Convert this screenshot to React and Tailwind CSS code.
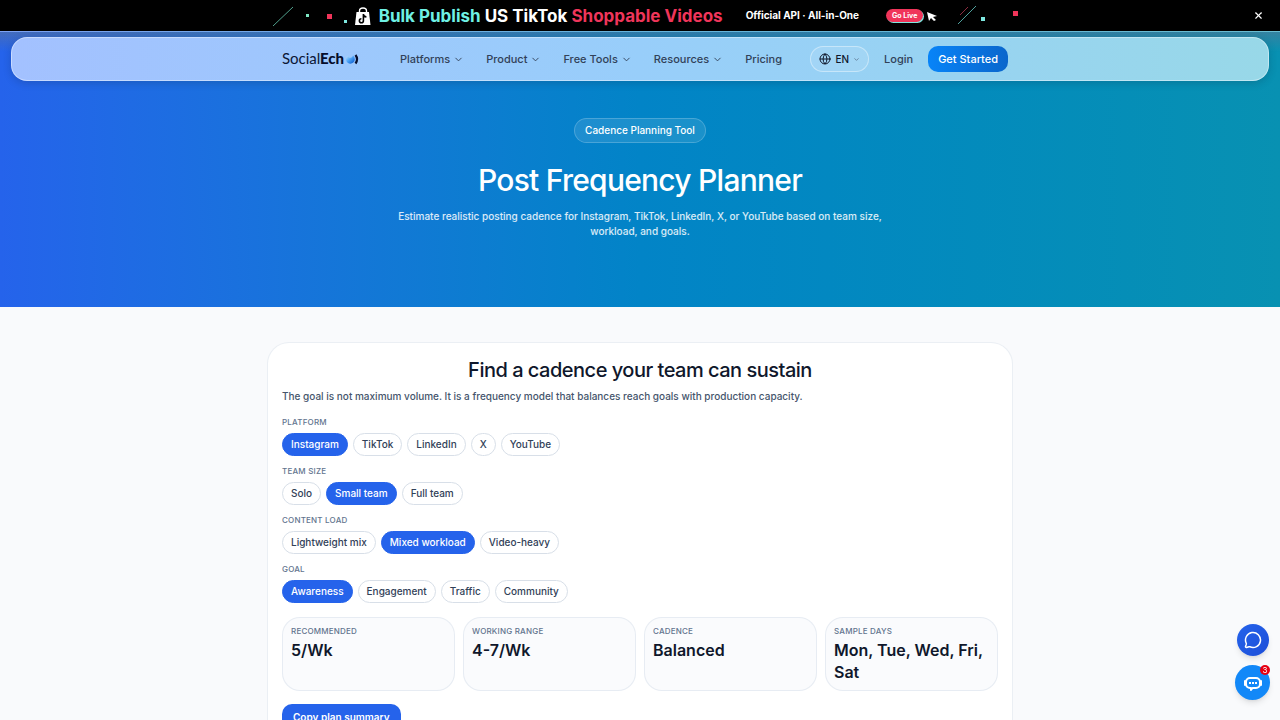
import { useState } from 'react'
import { ChevronDown, Globe, MessageCircle, X } from 'lucide-react'

const navItems = ['Platforms', 'Product', 'Free Tools', 'Resources']

const groups = [
  { key: 'platform', label: 'Platform', options: ['Instagram', 'TikTok', 'LinkedIn', 'X', 'YouTube'] },
  { key: 'team', label: 'Team size', options: ['Solo', 'Small team', 'Full team'] },
  { key: 'load', label: 'Content load', options: ['Lightweight mix', 'Mixed workload', 'Video-heavy'] },
  { key: 'goal', label: 'Goal', options: ['Awareness', 'Engagement', 'Traffic', 'Community'] },
]

const stats = [
  { label: 'Recommended', value: '5/Wk' },
  { label: 'Working range', value: '4-7/Wk' },
  { label: 'Cadence', value: 'Balanced' },
  { label: 'Sample days', value: 'Mon, Tue, Wed, Fri, Sat' },
]

function PromoBanner({ onClose }) {
  return (
    <div className="relative flex h-[31px] items-center justify-center bg-black text-white">
      <a href="#promo" className="flex items-center pl-3">
        <svg className="h-8 w-20 shrink-0" viewBox="0 0 80 32" fill="none" aria-hidden="true">
          <path d="M0 26 20 7" stroke="#4f9f8c" />
          <path d="M33 14h3v3h-3z" fill="#7ee8c4" />
          <path d="M54 14h5v5h-5z" fill="#f0355a" />
          <path d="M71 20h3v3h-3z" fill="#7ee8e0" />
        </svg>
        <svg className="ml-[2px] h-8 w-4 shrink-0" viewBox="0 0 16 32" fill="none" aria-hidden="true">
          <path d="M4.500 13v-2a3.500 3 0 0 1 7 0v2" stroke="#fff" strokeWidth="1.400" />
          <path d="M1.500 12h12.500l1.500 13H0z" fill="#fff" />
          <path d="M8.400 14v6.700a2 2 0 1 1-2-2M8.400 14.500c.3 1.600 1.300 2.300 3 2.400" stroke="#000" strokeWidth="1.600" />
        </svg>
        <span className="ml-2 text-[17px] leading-8 font-bold whitespace-nowrap">
          <span className="text-[#6ff0e4]">Bulk Publish</span> US TikTok{' '}
          <span className="text-[#f0355a]">Shoppable Videos</span>
        </span>
        <span className="ml-[23px] text-[10px] font-bold whitespace-nowrap">Official API · All-in-One</span>
        <span className="ml-[27px] rounded-full bg-[#f0355a] px-[6px] text-[7px] leading-[13px] font-bold whitespace-nowrap shadow-[1px_1px_0_#7ee8e0]">
          Go Live
        </span>
        <svg className="h-8 w-24 shrink-0" viewBox="0 0 96 32" fill="none" aria-hidden="true">
          <path d="m4 12 10 4-4 1 3 3-2 1-3-3-2 3z" fill="#fff" />
          <path d="m35 24 18-18" stroke="#4f9f9c" />
          <path d="m37 15 8-8" stroke="#8f2b40" />
          <path d="M58 17h4v4h-4z" fill="#7ee8e0" />
          <path d="M90 11h5v5h-5z" fill="#f0355a" />
        </svg>
      </a>
      <button onClick={onClose} aria-label="Close banner" className="absolute right-4 text-white">
        <X className="h-[11px] w-[11px]" strokeWidth={2.5} />
      </button>
    </div>
  )
}

function Logo() {
  return (
    <svg className="h-5 w-20" viewBox="0 0 80 20" role="img" aria-label="SocialEcho">
      <defs>
        <linearGradient id="echo" x1="0" y1="0" x2="1" y2="1">
          <stop offset="0" stopColor="#c4e8ff" />
          <stop offset="0.450" stopColor="#4ea4f5" />
          <stop offset="1" stopColor="#0050c8" />
        </linearGradient>
      </defs>
      <text x="0" y="15" className="font-['Lato',sans-serif] text-[15px] font-normal" fill="#0b1635">Social</text>
      <text x="38" y="15" className="font-['Lato',sans-serif] text-[15px] font-black" fill="#060d2b">Ech</text>
      <path d="M64 10c0-2 1-3 2-3 .5 2.500 4 2.500 5-.5 1 .8 1.800 2.200 1.800 4a4.400 4.400 0 0 1-8.800-.5z" fill="url(#echo)" />
      <path d="M73.500 6c1.800 2.400 1.800 6 0 8.500" fill="none" stroke="#060d2b" strokeWidth="2.200" />
    </svg>
  )
}

function Navbar() {
  return (
    <header className="mx-[11px] rounded-[16px] border border-white/40 bg-linear-to-r from-[#a3c1ff] via-[#98cefa] to-[#98d8e8] bg-origin-border shadow-[0_2px_8px_rgba(15,23,42,0.2)]">
      <div className="mx-auto flex h-[42px] max-w-[736px] items-center pl-[10px] text-[11px] font-medium text-slate-700">
        <a href="#home"><Logo /></a>
        <nav className="ml-[38px] flex items-center gap-[22px]">
          {navItems.map((item) => (
            <button key={item} className="flex items-center gap-[3px] whitespace-nowrap">
              {item}
              <ChevronDown className="h-[11px] w-[11px]" />
            </button>
          ))}
          <a href="#pricing">Pricing</a>
        </nav>
        <div className="ml-auto flex items-center">
          <button className="flex h-[26px] items-center gap-1 rounded-full border border-white/40 bg-white/10 px-2 text-[10px] text-slate-900">
            <Globe className="h-3 w-3" />
            EN
            <ChevronDown className="h-[7px] w-[7px] text-slate-600" />
          </button>
          <a href="#login" className="ml-[15px]">Login</a>
          <a
            href="#start"
            className="ml-[15px] rounded-[10px] bg-linear-to-r from-[#0784f8] to-[#0a66cc] px-[10px] leading-[26px] whitespace-nowrap text-white"
          >
            Get Started
          </a>
        </div>
      </div>
    </header>
  )
}

function ChipGroup({ label, options, value, onChange }) {
  return (
    <div role="group" aria-label={label}>
      <p className="text-[8px] leading-3 font-medium tracking-wide text-slate-500 uppercase">{label}</p>
      <div className="mt-[5px] flex flex-wrap gap-[5px]">
        {options.map((option) => (
          <button
            key={option}
            onClick={() => onChange(option)}
            aria-pressed={value === option}
            className={`rounded-full border px-2 text-[10px] leading-[21px] font-medium ${
              value === option ? 'border-[#2563eb] bg-[#2563eb] text-white' : 'border-[#d8dfe8] bg-white text-slate-700'
            }`}
          >
            {option}
          </button>
        ))}
      </div>
    </div>
  )
}

export default function App() {
  const [banner, setBanner] = useState(true)
  const [plan, setPlan] = useState({
    platform: 'Instagram',
    team: 'Small team',
    load: 'Mixed workload',
    goal: 'Awareness',
  })

  return (
    <div className="h-screen overflow-x-hidden overflow-y-auto bg-[#f9fafc] font-['Inter',sans-serif] [scrollbar-width:none]">
      {banner && <PromoBanner onClose={() => setBanner(false)} />}

      {/* Hero */}
      <section className="bg-linear-to-r from-[#2563eb] via-[#0284c7] to-[#0891b2] pb-[68px] text-center text-white">
        <div className="border-t border-white/40 bg-linear-to-b from-slate-500/50 to-transparent to-40% pt-[5px]">
          <Navbar />
        </div>
        <div className="mx-auto mt-[35px] max-w-[512px] px-2">
          <span className="inline-block rounded-full border border-white/20 bg-white/10 px-[10px] text-[10px] leading-[23px] font-medium">
            Cadence Planning Tool
          </span>
          <h1 className="mt-[17px] text-[30px] leading-10 font-medium tracking-tight">Post Frequency Planner</h1>
          <p className="mt-[9px] text-[10px] leading-[15px] font-medium text-white/85">
            Estimate realistic posting cadence for Instagram, TikTok, LinkedIn, X, or YouTube based on team size,
            workload, and goals.
          </p>
        </div>
      </section>

      {/* Planner */}
      <main className="mx-auto mt-[35px] max-w-[746px] rounded-[22px] border border-slate-200/70 bg-white px-[14px] pt-[14px] pb-4">
        <h2 className="text-center text-[20px] leading-[26px] font-medium tracking-tight text-slate-900">
          Find a cadence your team can sustain
        </h2>
        <p className="mt-[5px] text-[10px] leading-4 font-medium text-slate-600">
          The goal is not maximum volume. It is a frequency model that balances reach goals with production capacity.
        </p>
        <div className="mt-3 flex flex-col gap-[9px]">
          {groups.map((g) => (
            <ChipGroup
              key={g.key}
              label={g.label}
              options={g.options}
              value={plan[g.key]}
              onChange={(v) => setPlan({ ...plan, [g.key]: v })}
            />
          ))}
        </div>
        <dl className="mt-[14px] grid grid-cols-4 gap-2">
          {stats.map((s) => (
            <div key={s.label} className="rounded-[18px] border border-slate-200/80 bg-[#fafbfd] px-2 pt-[7px] pb-[7px]">
              <dt className="text-[8px] leading-3 font-medium tracking-wide text-slate-500 uppercase">{s.label}</dt>
              <dd className="mt-[2px] text-[16px] leading-[22px] font-semibold text-slate-900">{s.value}</dd>
            </div>
          ))}
        </dl>
        <button className="mt-[13px] rounded-[10px] bg-[#2563eb] px-[11px] text-[10px] leading-[26px] font-semibold text-white">
          Copy plan summary
        </button>
      </main>

      {/* Floating chat buttons */}
      <div className="fixed right-[10px] bottom-5 flex flex-col items-center gap-[9px]">
        <button
          aria-label="Chat"
          className="flex h-8 w-8 items-center justify-center rounded-full bg-linear-to-br from-[#2563eb] to-[#1d4ed8] text-white shadow-md"
        >
          <MessageCircle className="h-[18px] w-[18px]" />
        </button>
        <button
          aria-label="Open support, 3 unread"
          className="relative flex h-[35px] w-[35px] items-center justify-center rounded-full bg-[#1288f8] shadow-md"
        >
          <svg className="h-5 w-5" viewBox="0 0 20 20" fill="none" aria-hidden="true">
            <path d="M7 5h6a4 4 0 0 1 4 4v2a4 4 0 0 1-4 4H9.500L8 17v-2H7a4 4 0 0 1-4-4V9a4 4 0 0 1 4-4z" stroke="#fff" strokeWidth="2" strokeLinejoin="round" />
            <path d="M2 8v4M18 8v4" stroke="#fff" strokeWidth="2" strokeLinecap="round" />
            <path d="M6 9h2v2H6zM9 9h2v2H9zM12 9h2v2h-2z" fill="#fff" />
          </svg>
          <span className="absolute top-0 right-0 h-[10px] w-[10px] rounded-full bg-[#e60012] text-[8px] leading-[10px] text-white">
            3
          </span>
        </button>
      </div>
    </div>
  )
}
